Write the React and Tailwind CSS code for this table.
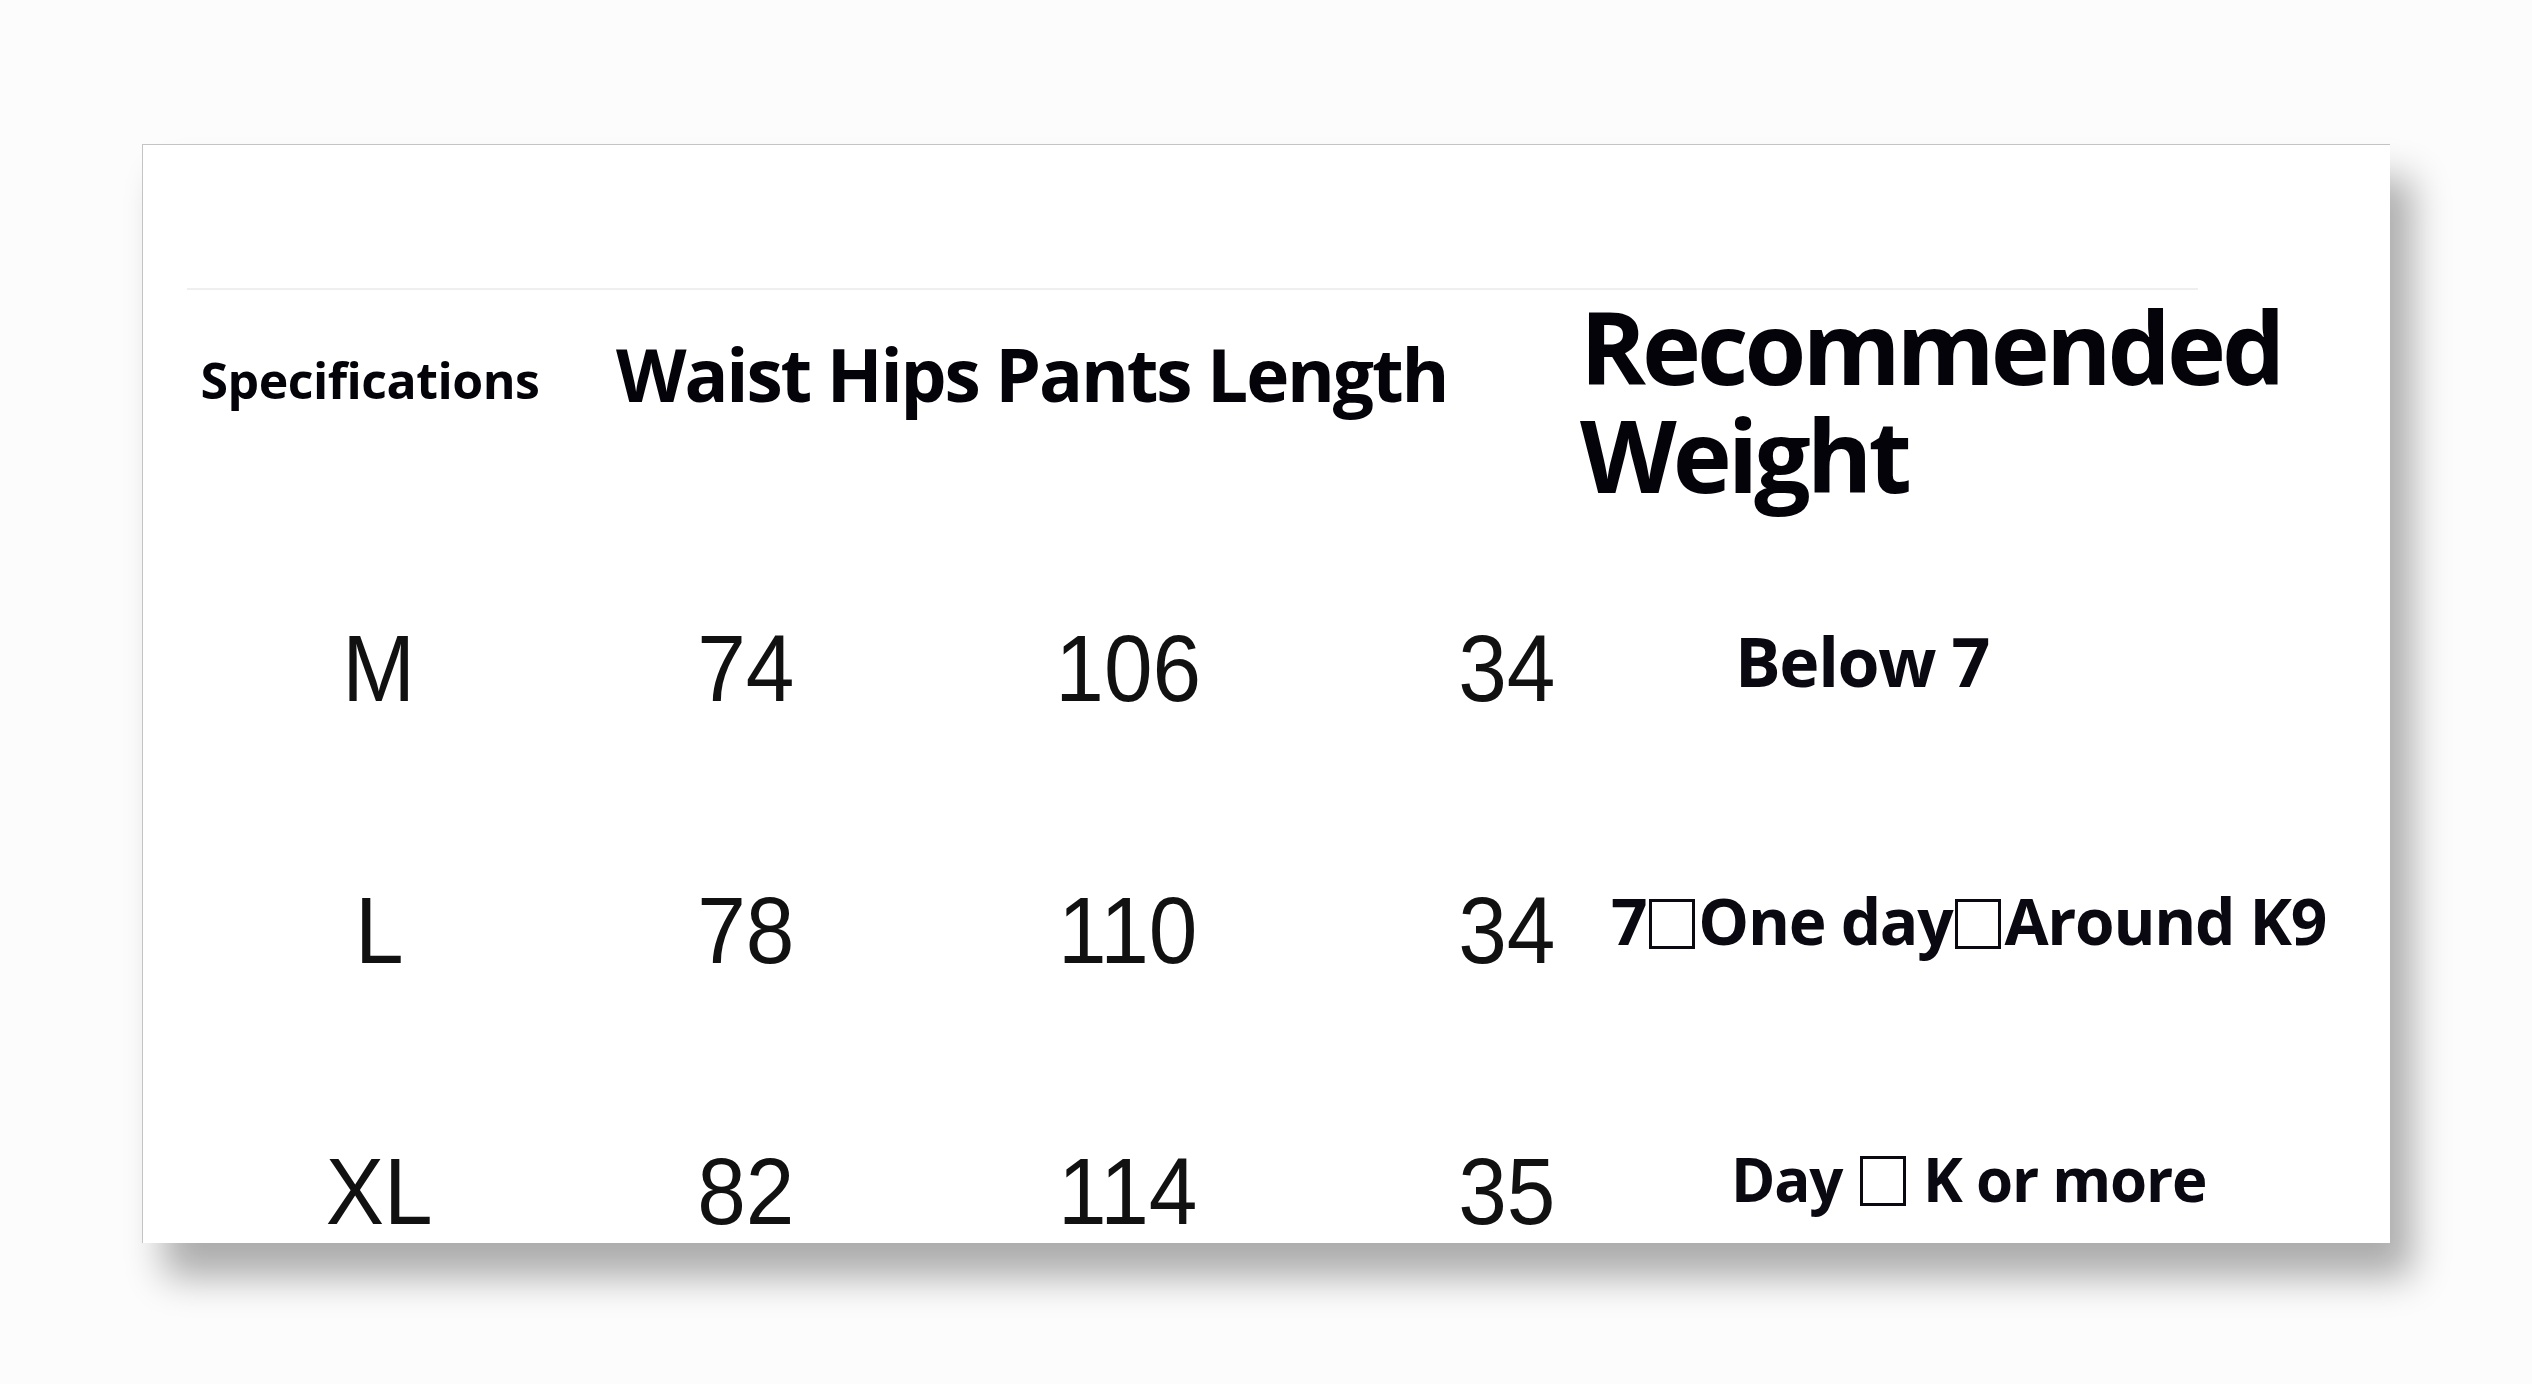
const rows = [
  { size: 'M', waist: '74', hips: '106', length: '34', rowClass: 'h-[262px]', weight: ['Below 7'], weightClass: 'pl-[40px] mb-[14px] text-[68px]' },
  { size: 'L', waist: '78', hips: '110', length: '34', rowClass: 'h-[262px]', weight: ['7', 'One day', 'Around K9'], weightClass: '-ml-[84px] mb-[18px] text-[64px]' },
  { size: 'XL', waist: '82', hips: '114', length: '35', rowClass: 'h-[183px] pt-[78px]', weight: ['Day ', ' K or more'], weightClass: 'pl-[36px] mb-[26px] text-[60px]' },
]

const bold = { fontFamily: '"Open Sans", "Noto Sans", sans-serif' }
const thin = { fontFamily: '"Liberation Sans", Arial, sans-serif' }

// tofu box, as in the picture
function Box() {
  return <span className="inline-block w-[46px] h-[50px] border-[3px] border-[#0a0810] align-[-4px] mx-[3px]" />
}

function Num({ children, className = '' }) {
  return (
    <div className={`w-[376px] text-center text-[95px] leading-none ${className}`} style={thin}>
      <span className="inline-block scale-x-[0.92]">{children}</span>
    </div>
  )
}

function App() {
  return (
    <div className="w-[2532px] h-[1384px] bg-[#fcfcfc] pt-[144px] pl-[142px] overflow-hidden">
      <div className="w-[2248px] h-[1099px] bg-white border-t border-l border-[#c4c4c4] shadow-[22px_34px_36px_rgba(0,0,0,0.32)] overflow-hidden">
        <div className="h-[143px]" />
        <div className="h-[2px] ml-[44px] w-[2011px] bg-[#efefef]" />

        {/* header */}
        <div className="flex items-start h-[247px] pl-[48px] text-[#05030a] font-bold" style={bold}>
          <div className="w-[376px] pr-[18px] mt-[65px] text-center text-[50px] leading-none tracking-[-0.01em] whitespace-nowrap">
            Specifications
          </div>
          <div className="w-[1013px] pl-[49px] mt-[47px] text-[73px] leading-none tracking-[-0.03em] whitespace-nowrap">
            Waist Hips Pants Length
          </div>
          <div className="mt-[2px] text-[100px] leading-[108px] tracking-[-0.04em]">
            <div>Recommended</div>
            <div>Weight</div>
          </div>
        </div>

        {/* rows */}
        {rows.map((r) => (
          <div key={r.size} className={`flex items-center pl-[48px] text-[#111] ${r.rowClass}`}>
            <Num>{r.size}</Num>
            <Num className="pr-[18px]">{r.waist}</Num>
            <Num className="pr-[6px]">{r.hips}</Num>
            <Num>{r.length}</Num>
            <div className={`whitespace-nowrap font-bold leading-none tracking-[-0.02em] text-[#0a0810] ${r.weightClass}`} style={bold}>
              {r.weight.map((part, i) => (
                <span key={i}>
                  {i > 0 && <Box />}
                  {part}
                </span>
              ))}
            </div>
          </div>
        ))}
      </div>
    </div>
  )
}

export default App
